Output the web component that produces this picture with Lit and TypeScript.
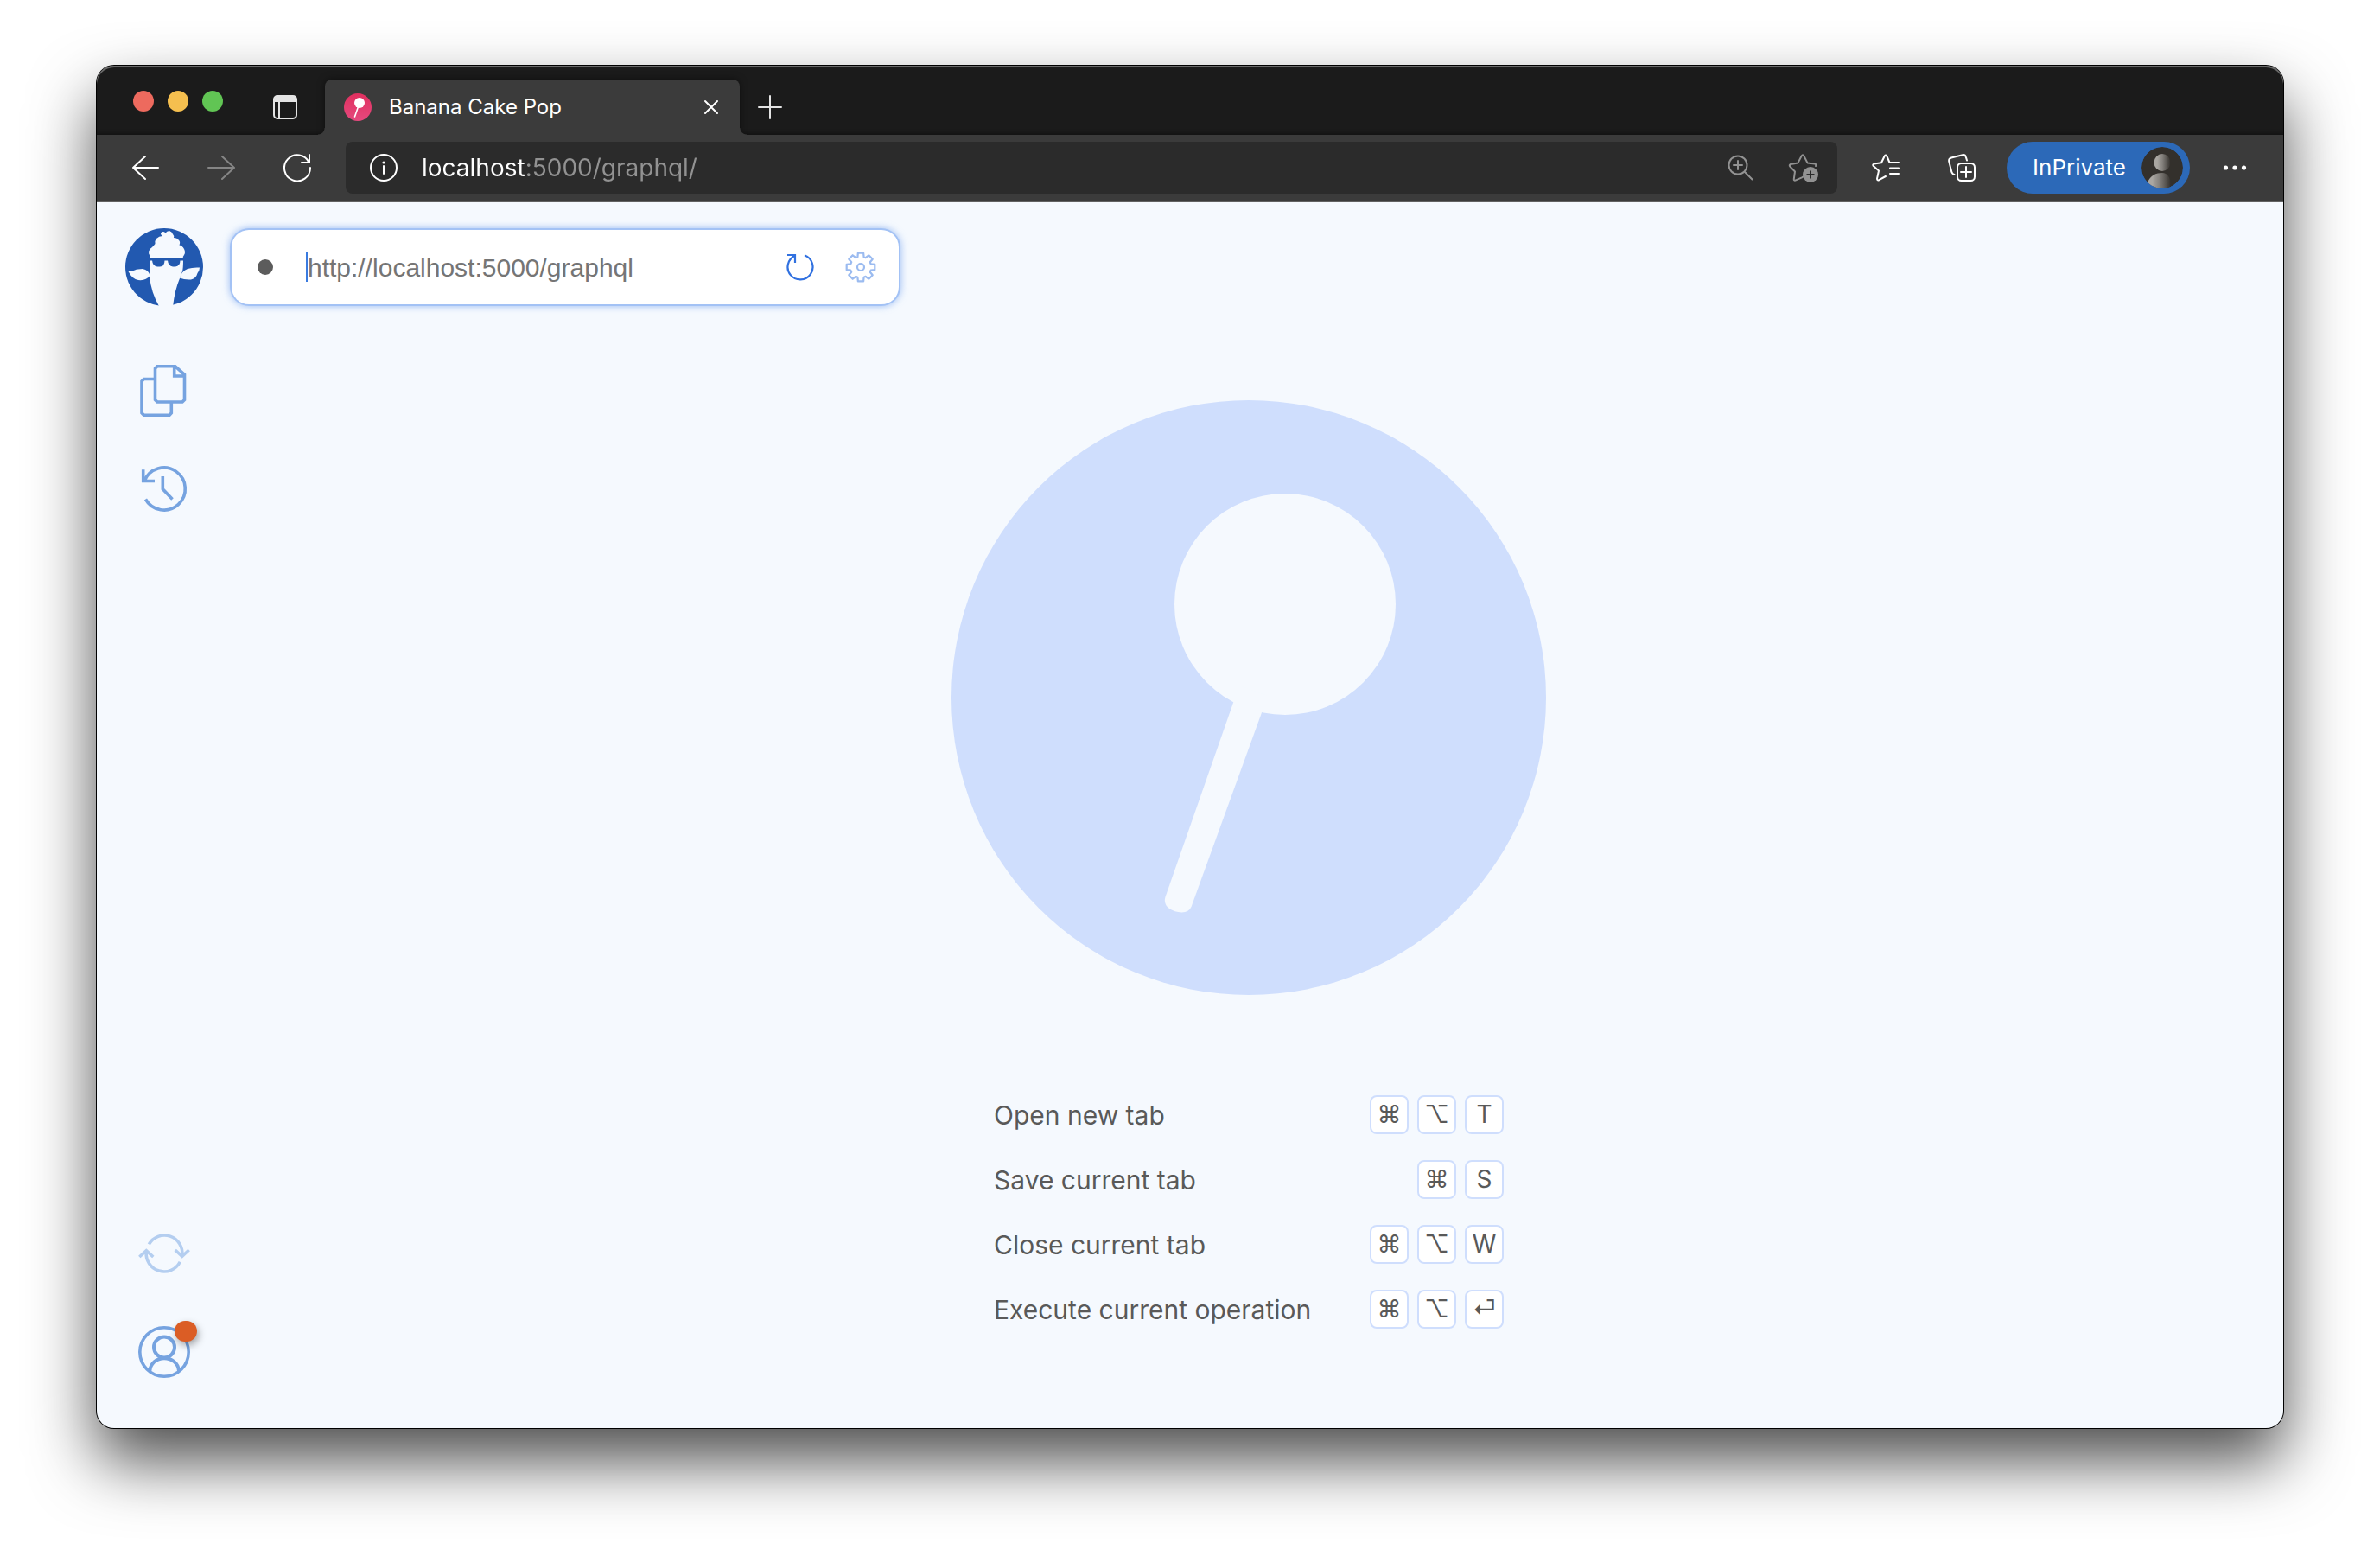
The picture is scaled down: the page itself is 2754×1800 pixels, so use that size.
import { LitElement, html, css, svg, nothing } from "lit";
import { customElement, property } from "lit/decorators.js";

type Key = { label: string; name: string };

const CMD: Key = { label: "⌘", name: "Command" };
const OPT: Key = { label: "⌥", name: "Option" };
const RETURN: Key = { label: "⏎", name: "Return" };
const letter = (label: string): Key => ({ label, name: label });

const SHORTCUTS: { action: string; keys: Key[] }[] = [
  { action: "Open new tab", keys: [CMD, OPT, letter("T")] },
  { action: "Save current tab", keys: [CMD, letter("S")] },
  { action: "Close current tab", keys: [CMD, OPT, letter("W")] },
  { action: "Execute current operation", keys: [CMD, OPT, RETURN] },
];

/** Outline of an eight-toothed gear centred in a 36px box. */
function gearPath(): string {
  const points: string[] = [];
  for (let tooth = 0; tooth < 8; tooth++) {
    const mid = (tooth * Math.PI) / 4 - Math.PI / 2;
    const corners: [number, number][] = [
      [12.2, -0.3],
      [16.6, -0.19],
      [16.6, 0.19],
      [12.2, 0.3],
    ];
    for (const [radius, offset] of corners) {
      const x = 18 + radius * Math.cos(mid + offset);
      const y = 18 + radius * Math.sin(mid + offset);
      points.push(`${x.toFixed(2)} ${y.toFixed(2)}`);
    }
  }
  return `M${points.join("L")}Z`;
}

const ICONS = {
  back: { w: 32, h: 32, body: svg`<path d="M31 16H2M16 3 2 16l14 13" stroke-width="2" stroke-linecap="round" stroke-linejoin="round"/>` },
  forward: { w: 32, h: 32, body: svg`<path d="M1 16h29M17 3l14 13-14 13" stroke-width="2" stroke-linecap="round" stroke-linejoin="round"/>` },
  refresh: { w: 32, h: 32, body: svg`<path d="M29.6 10A15 15 0 1 0 31 16M30 1v9h-9" stroke-width="2" stroke-linecap="round" stroke-linejoin="round"/>` },
  info: { w: 32, h: 32, body: svg`<circle cx="16" cy="16" r="15" stroke-width="2"/><path d="M16 14v9" stroke-width="2" stroke-linecap="round"/><circle cx="16" cy="10" r="1.6" fill="currentColor" stroke="none"/>` },
  panel: { w: 28, h: 28, body: svg`<rect x="1" y="1" width="26" height="26" rx="4" stroke-width="2"/><path d="M1 8V5a4 4 0 0 1 4-4h18a4 4 0 0 1 4 4v3z" fill="currentColor" stroke="none"/><path d="M7 8v19" stroke-width="2"/>` },
  close: { w: 18, h: 18, body: svg`<path d="M2 2l14 14M16 2 2 16" stroke-width="2" stroke-linecap="round"/>` },
  plus: { w: 28, h: 28, body: svg`<path d="M14 1v26M1 14h26" stroke-width="2" stroke-linecap="round"/>` },
  magnify: { w: 32, h: 32, body: svg`<circle cx="13" cy="13" r="10.5" stroke-width="2"/><path d="M13 8v10M8 13h10M21 21l8.500 8.500" stroke-width="2" stroke-linecap="round"/>` },
  starAdd: { w: 36, h: 36, body: svg`<path d="M22 26.500 17 29.300 9.500 32.600Q7.500 33 7.800 30.800L9 22.500 3.200 16.500Q2 14.800 4 14L12.500 12.400 16.700 4.300Q18 2.200 19.300 4.300L23.500 12.400 32 13.600Q34 14 33 16" stroke-width="2" stroke-linecap="round" stroke-linejoin="round"/><circle cx="27" cy="26" r="9" fill="currentColor" stroke="none"/><path d="M27 21.500v9M22.500 26h9" stroke="#2b2b2b" stroke-width="2"/>` },
  starList: { w: 32, h: 32, body: svg`<path d="M31 10H20.500L17.300 2.500Q16 .5 14.700 2.500L11 10.300 2.400 11.600Q.4 12.300 1.800 14L8 19.500 6 28.600Q6 31 8.300 30.200L16 26M21 16.500h10M21 23h10" stroke-width="2" stroke-linecap="round" stroke-linejoin="round"/>` },
  collections: { w: 32, h: 32, body: svg`<path d="M22 7.500 20.800 3.600Q20 .7 17 1.200L4 4.500Q.7 5.500 1.200 8.600L4.200 20.500Q5 23.500 7.500 24" stroke-width="2" stroke-linecap="round"/><rect x="11" y="11" width="20" height="20" rx="4.500" stroke-width="2"/><path d="M21 15v12M15 21h12" stroke-width="2" stroke-linecap="round"/>` },
  more: { w: 32, h: 32, body: svg`<g fill="currentColor" stroke="none"><circle cx="5.500" cy="16" r="2.600"/><circle cx="16" cy="16" r="2.600"/><circle cx="26.500" cy="16" r="2.600"/></g>` },
  reload: { w: 32, h: 32, body: svg`<path d="M21 2.300A14.500 14.500 0 1 1 10 2.700M1 2h9v9" stroke-width="2.200"/>` },
  gear: { w: 36, h: 36, body: svg`<path d="${gearPath()}" stroke-width="2.200" stroke-linejoin="round"/><circle cx="18" cy="18" r="4" stroke-width="2.200"/>` },
  documents: { w: 60, h: 60, body: svg`<path d="M22 1.700H42.700L53.500 11.300V40.600L51 43H22L19.500 40.600V4.200ZM41.700 1.700V13H53.500M19.500 16.500H6.500L4 19V55.800L6.500 58.300H36L38.300 55.800V43" stroke-width="3.600"/>` },
  history: { w: 60, h: 60, body: svg`<path d="M8.400 41.500A24.500 24.500 0 1 0 7 20.500M5.700 7.300V20.500H19M28.300 15V29.700L39.500 41.500" stroke-width="3.600"/>` },
  sync: { w: 60, h: 60, body: svg`<path d="M12.300 19.300A20.700 20.700 0 0 1 50.700 32.500M42.700 26 50.700 33.300 58.700 26M48.300 39.700A20.700 20.700 0 0 1 9.300 28M1.300 34 9.300 26.700 17.300 34" stroke-width="3.600"/>` },
  user: { w: 60, h: 60, body: svg`<circle cx="30" cy="30" r="28.200" stroke-width="3.600"/><circle cx="30" cy="24.500" r="12" stroke-width="4"/><path d="M13.300 52C14 43 21 37.200 30 37.200S46.500 43 47 52" stroke-width="4"/>` },
};

type IconName = keyof typeof ICONS;

@customElement("ui-icon")
export class UiIcon extends LitElement {
  static styles = css`
    :host {
      display: block;
      flex: none;
      line-height: 0;
    }
    .glyph {
      display: block;
      fill: none;
      stroke: currentColor;
    }
  `;

  @property() name: IconName = "more";

  render() {
    const { w, h, body } = ICONS[this.name];
    return html`<svg class="glyph" width=${w} height=${h} viewBox="0 0 ${w} ${h}" aria-hidden="true">${body}</svg>`;
  }
}

@customElement("browser-tabs")
export class BrowserTabs extends LitElement {
  static styles = css`
    :host {
      display: flex;
      align-items: center;
      height: 80px;
      box-sizing: border-box;
      padding: 16px 40px 0 42px;
      background: #1b1b1b;
      color: #fff;
      box-shadow: inset 0 2px 0 #6a6a6a, inset 0 -5px 5px -4px #101010;
      font-family: Inter, "Liberation Sans", sans-serif;
    }
    button {
      display: block;
      padding: 0;
      border: 0;
      background: none;
      color: inherit;
      font: inherit;
    }
    .lights {
      display: flex;
      gap: 16px;
      padding-bottom: 14px;
    }
    .light {
      width: 24px;
      height: 24px;
      border-radius: 50%;
    }
    .red {
      background: #ed6a5e;
    }
    .amber {
      background: #f5bf4f;
    }
    .green {
      background: #61c554;
    }
    .panel {
      margin: 0 32px 0 58px;
      color: #e4e4e4;
    }
    .tab {
      position: relative;
      display: flex;
      align-items: center;
      gap: 20px;
      flex: 0 1 480px;
      height: 64px;
      box-sizing: border-box;
      padding: 0 24px 0 22px;
      border-radius: 8px 8px 0 0;
      background: #3b3b3b;
      box-shadow: 0 0 8px rgba(0, 0, 0, 0.5);
      clip-path: inset(-10px -10px 0 -10px);
    }
    .tab::before,
    .tab::after {
      content: "";
      position: absolute;
      bottom: 0;
      width: 8px;
      height: 8px;
    }
    .tab::before {
      right: 100%;
      background: radial-gradient(circle at 0 0, transparent 7px, #3b3b3b 8px);
    }
    .tab::after {
      left: 100%;
      background: radial-gradient(circle at 100% 0, transparent 7px, #3b3b3b 8px);
    }
    .title {
      flex: 1;
      font-size: 24px;
      line-height: 32px;
      text-align: left;
      white-space: nowrap;
    }
    .add {
      margin-left: 21px;
      color: #e4e4e4;
    }
  `;

  render() {
    return html`
      <div class="lights">
        <button class="light red" aria-label="Close window"></button>
        <button class="light amber" aria-label="Minimise window"></button>
        <button class="light green" aria-label="Zoom window"></button>
      </div>
      <button class="panel" aria-label="Vertical tabs"><ui-icon name="panel"></ui-icon></button>
      <div class="tab">
        <svg width="32" height="32" viewBox="0 0 32 32" aria-hidden="true">
          <defs>
            <linearGradient id="pink" x1="0" y1="0" x2="0" y2="1">
              <stop offset="0" stop-color="#e0305f" />
              <stop offset="1" stop-color="#e5497e" />
            </linearGradient>
          </defs>
          <circle cx="16" cy="16" r="16" fill="url(#pink)" />
          <circle cx="18" cy="11" r="6" fill="#fff" />
          <path d="M16.300 16 12.500 27" stroke="#fff" stroke-width="1.600" stroke-linecap="round" />
        </svg>
        <span class="title">Banana Cake Pop</span>
        <button aria-label="Close tab"><ui-icon name="close"></ui-icon></button>
      </div>
      <button class="add" aria-label="New tab"><ui-icon name="plus"></ui-icon></button>
    `;
  }
}

@customElement("browser-toolbar")
export class BrowserToolbar extends LitElement {
  static styles = css`
    :host {
      display: flex;
      align-items: center;
      height: 78px;
      box-sizing: border-box;
      padding: 0 40px;
      border-bottom: 2px solid #626262;
      background: #3b3b3b;
      color: #fff;
      font-family: Inter, "Liberation Sans", sans-serif;
    }
    button {
      display: block;
      padding: 0;
      border: 0;
      background: none;
      color: inherit;
      font: inherit;
    }
    .nav {
      display: flex;
      gap: 56px;
      margin-right: 40px;
    }
    .nav button:disabled {
      color: #858585;
    }
    .address {
      display: flex;
      align-items: center;
      flex: 1;
      height: 60px;
      box-sizing: border-box;
      padding: 0 22px 0 28px;
      border-radius: 8px;
      background: #2b2b2b;
    }
    .url {
      flex: 1;
      min-width: 0;
      margin: 0 28px;
      padding: 0;
      border: 0;
      outline: 0;
      font: inherit;
      font-size: 28px;
      line-height: 40px;
      background: linear-gradient(90deg, #fff 119px, #929292 119px);
      -webkit-background-clip: text;
      background-clip: text;
      -webkit-text-fill-color: transparent;
    }
    .inline {
      display: flex;
      gap: 38px;
      color: #929292;
    }
    .actions {
      display: flex;
      gap: 56px;
      margin: 0 36px 0 40px;
    }
    .private {
      display: flex;
      align-items: center;
      gap: 18px;
      height: 60px;
      margin-right: 36px;
      padding: 0 8px 0 30px;
      border-radius: 30px;
      background: #2c69b8;
      font-size: 26px;
      line-height: 32px;
    }
    .avatar {
      display: block;
      border-radius: 50%;
    }
  `;

  render() {
    return html`
      <div class="nav">
        <button aria-label="Back"><ui-icon name="back"></ui-icon></button>
        <button aria-label="Forward" disabled><ui-icon name="forward"></ui-icon></button>
        <button aria-label="Refresh"><ui-icon name="refresh"></ui-icon></button>
      </div>
      <div class="address">
        <button aria-label="Site information"><ui-icon name="info"></ui-icon></button>
        <input class="url" type="text" aria-label="Address" .value=${"localhost:5000/graphql/"} />
        <div class="inline">
          <button aria-label="Zoom"><ui-icon name="magnify"></ui-icon></button>
          <button aria-label="Add to favourites"><ui-icon name="starAdd"></ui-icon></button>
        </div>
      </div>
      <div class="actions">
        <button aria-label="Favourites"><ui-icon name="starList"></ui-icon></button>
        <button aria-label="Collections"><ui-icon name="collections"></ui-icon></button>
      </div>
      <button class="private">
        <span>InPrivate</span>
        <svg class="avatar" width="48" height="48" viewBox="0 0 48 48" aria-hidden="true">
          <defs>
            <linearGradient id="shade" x1="0" x2="1">
              <stop offset="0.200" stop-color="#aaa7a2" />
              <stop offset="0.500" stop-color="#85827e" />
              <stop offset="1" stop-color="#33302c" />
            </linearGradient>
          </defs>
          <circle cx="24" cy="24" r="24" fill="#33302c" />
          <ellipse cx="24" cy="18" rx="9.500" ry="10" fill="url(#shade)" />
          <path d="M7 41C10 33 17 30 24 30c6 0 10 5 10 16-7 3-20 3-27-5z" fill="url(#shade)" />
        </svg>
      </button>
      <button aria-label="Settings and more"><ui-icon name="more"></ui-icon></button>
    `;
  }
}

@customElement("side-bar")
export class SideBar extends LitElement {
  static styles = css`
    :host {
      display: flex;
      flex-direction: column;
      align-items: center;
      gap: 54px;
      box-sizing: border-box;
      padding: 30px 0 58px 20px;
      color: #76a3e0;
    }
    .logo {
      display: block;
      margin-bottom: 14px;
    }
    .item {
      position: relative;
      display: block;
      padding: 0;
      border: 0;
      background: none;
      color: inherit;
    }
    .sync {
      margin-top: auto;
      color: #b4cef0;
    }
    .badge {
      position: absolute;
      top: -6px;
      right: -8px;
      width: 26px;
      height: 24px;
      border-radius: 12px;
      background: #db5d25;
      box-shadow: 2px 4px 8px rgba(0, 0, 0, 0.35);
    }
  `;

  render() {
    return html`
      <svg class="logo" width="90" height="90" viewBox="0 0 90 90" role="img" aria-label="Banana Cake Pop">
        <circle cx="45" cy="45" r="45" fill="#2259b0" />
        <g fill="#f5f9fe">
          <path d="M28 35 29 32Q26.500 30 27 27 27.500 24 31 22 33 20 34.500 18 34 14 36 12 39 9 43 9 40 7 41.500 5 44 3 46.500 5.500 48 3 51 3 54 4 55 7 57 9 56 11 60 11 62 14 64 16 62.500 19.500 66 20 68 24 70 28 68 31 66 33 67 35Z" />
          <path d="M28 37.500H67Q67 46 66 50 64 54 63 58 57 72 55 91H39.500Q30 75 28 56Z" />
          <path d="M28.500 55Q27 48 20 47 14 47 11 48.500 7 50 3.500 50 8 59 15 60 24 61 28.500 55Z" />
          <path d="M62.500 57.500Q65 50 72 47 78 45 86 45.500 86 49 83.500 52 82 58 76 59.500 69 60 62.500 57.500Z" />
        </g>
        <path d="M31 37H45.500Q45.500 44.500 40 44.500H37Q31.500 44 31 37ZM49 37H63.500Q63.500 44 58 44.500H55Q49.500 44 49 37Z" fill="#2259b0" />
      </svg>
      <button class="item" aria-label="Documents"><ui-icon name="documents"></ui-icon></button>
      <button class="item" aria-label="History"><ui-icon name="history"></ui-icon></button>
      <button class="item sync" aria-label="Synchronise"><ui-icon name="sync"></ui-icon></button>
      <button class="item" aria-label="Account">
        <ui-icon name="user"></ui-icon>
        <span class="badge"></span>
      </button>
    `;
  }
}

@customElement("endpoint-bar")
export class EndpointBar extends LitElement {
  static styles = css`
    :host {
      display: flex;
      align-items: center;
      box-sizing: border-box;
      width: 772px;
      max-width: 100%;
      height: 86px;
      padding: 0 26px 0 30px;
      border-radius: 20px;
      background: #fff;
      box-shadow: 0 0 0 2px #a3c2f5, 0 0 8px 2px rgba(90, 145, 235, 0.6);
    }
    .status {
      width: 18px;
      height: 18px;
      margin-right: 38px;
      border-radius: 50%;
      background: #5c5c5c;
    }
    .caret {
      width: 2px;
      height: 34px;
      background: #3a7be0;
    }
    .endpoint {
      flex: 1;
      min-width: 0;
      padding: 2px 0 0;
      border: 0;
      outline: 0;
      background: none;
      color: #333;
      font-family: "Liberation Sans", Arial, sans-serif;
      font-size: 30px;
      line-height: 40px;
    }
    .endpoint::placeholder {
      color: #757575;
      opacity: 1;
    }
    .tools {
      display: flex;
      align-items: center;
      gap: 36px;
    }
    .tool {
      display: block;
      padding: 0;
      border: 0;
      background: none;
      color: #3171e0;
    }
    .faded {
      color: #9bbbf0;
    }
  `;

  render() {
    return html`
      <span class="status"></span>
      <span class="caret"></span>
      <input class="endpoint" type="url" aria-label="Schema endpoint" placeholder="http://localhost:5000/graphql" />
      <div class="tools">
        <button class="tool" aria-label="Reload schema"><ui-icon name="reload"></ui-icon></button>
        <button class="tool faded" aria-label="Connection settings"><ui-icon name="gear"></ui-icon></button>
      </div>
    `;
  }
}

@customElement("start-screen")
export class StartScreen extends LitElement {
  static styles = css`
    :host {
      display: flex;
      flex-direction: column;
      align-items: center;
      justify-content: center;
      gap: 116px;
      padding-bottom: 4px;
      color: #595959;
      font-family: Inter, "Liberation Sans", sans-serif;
    }
    .emblem {
      display: block;
      width: 688px;
      max-width: 100%;
      height: auto;
    }
    .shortcuts {
      display: grid;
      grid-template-columns: 1fr;
      gap: 30px;
      width: 590px;
      margin: 0;
      font-size: 30px;
      line-height: 45px;
    }
    .row {
      display: flex;
      align-items: center;
      justify-content: space-between;
      height: 45px;
    }
    .action {
      padding-top: 2px;
      white-space: nowrap;
    }
    .keys {
      display: flex;
      gap: 10px;
      margin: 0;
    }
    .key {
      display: block;
      box-sizing: border-box;
      width: 45px;
      height: 45px;
      border: 2px solid #cfdefd;
      border-radius: 8px;
      background: #fff;
      font-family: inherit;
      font-size: 28px;
      line-height: 41px;
      text-align: center;
    }
  `;

  render() {
    return html`
      <svg class="emblem" viewBox="0 0 688 688" aria-hidden="true">
        <circle cx="344" cy="344" r="344" fill="#cfdefd" />
        <g fill="#f5f9fe">
          <circle cx="386" cy="236" r="128" />
          <path d="M333 330 247.500 574.500Q245 583 252 588 258 592 266.500 592.500 274.500 592.500 277.500 586L366 342Z" />
        </g>
      </svg>
      <dl class="shortcuts">
        ${SHORTCUTS.map(
          ({ action, keys }) => html`
            <div class="row">
              <dt class="action">${action}</dt>
              <dd class="keys">
                ${keys.map(
                  ({ label, name }) => html`<kbd class="key" title=${label === name ? nothing : name}>${label}</kbd>`
                )}
              </dd>
            </div>
          `
        )}
      </dl>
    `;
  }
}

@customElement("app-root")
export class AppRoot extends LitElement {
  static styles = css`
    :host {
      display: flex;
      box-sizing: border-box;
      min-height: 100vh;
      padding: 76px 112px 148px;
      background: #fff;
      overflow: hidden;
    }
    .window {
      display: flex;
      flex-direction: column;
      flex: 1;
      min-width: 0;
      border-radius: 20px;
      background: #f5f9fe;
      box-shadow: 0 0 0 1px #000, 0 38px 76px rgba(0, 0, 0, 0.7);
    }
    .tabs {
      border-radius: 20px 20px 0 0;
    }
    .page {
      display: grid;
      grid-template-columns: 136px 1fr;
      flex: 1;
    }
    .workspace {
      display: flex;
      flex-direction: column;
      min-width: 0;
    }
    .top {
      padding: 32px 20px 0;
    }
    .start {
      flex: 1;
    }
  `;

  render() {
    return html`
      <div class="window">
        <browser-tabs class="tabs"></browser-tabs>
        <browser-toolbar></browser-toolbar>
        <div class="page">
          <side-bar></side-bar>
          <main class="workspace">
            <div class="top"><endpoint-bar></endpoint-bar></div>
            <start-screen class="start"></start-screen>
          </main>
        </div>
      </div>
    `;
  }
}
